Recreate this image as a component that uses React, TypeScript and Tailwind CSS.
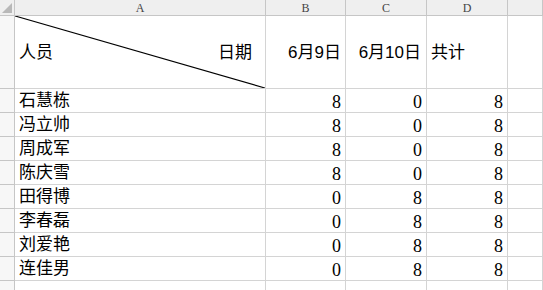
import clsx from "clsx";

const rows: [string, number, number, number][] = [
  ["石慧栋", 8, 0, 8],
  ["冯立帅", 8, 0, 8],
  ["周成军", 8, 0, 8],
  ["陈庆雪", 8, 0, 8],
  ["田得博", 0, 8, 8],
  ["李春磊", 0, 8, 8],
  ["刘爱艳", 0, 8, 8],
  ["连佳男", 0, 8, 8],
];

const cjk = "font-['Liberation_Sans','Noto_Sans_CJK_SC',sans-serif]";
const num = "font-['Liberation_Serif','Noto_Sans_CJK_SC',serif]";

function Cell({
  className,
  children,
}: {
  className?: string;
  children?: React.ReactNode;
}) {
  return (
    <div
      className={clsx(
        "border-r border-b border-[#d4d4d4] bg-white flex items-center overflow-hidden whitespace-nowrap",
        className,
      )}
    >
      {children}
    </div>
  );
}

function ColHead({ label }: { label?: string }) {
  return (
    <div className="border-r border-b border-[#c6c6c6] bg-[#efefef] flex items-center justify-center text-[12px] leading-none text-[#444] font-['Liberation_Serif',serif] pt-[1px]">
      {label}
    </div>
  );
}

export default function App() {
  return (
    <div className="w-[543px] h-[290px] overflow-hidden bg-white text-black">
      <div className="grid grid-cols-[15px_251px_80px_81px_81px_1fr] grid-rows-[16px_73px_repeat(9,24px)]">
        {/* corner */}
        <div className="relative border-r border-b border-[#c6c6c6] bg-[#efefef]">
          <div className="absolute right-[2px] bottom-[2px] w-0 h-0 border-l-[10px] border-l-transparent border-b-[10px] border-b-[#b8b8b8]" />
        </div>
        <ColHead label="A" />
        <ColHead label="B" />
        <ColHead label="C" />
        <ColHead label="D" />
        <ColHead />

        {/* header row */}
        <div className="border-r border-b border-[#c6c6c6] bg-[#f7f7f7]" />
        <Cell className={clsx("relative justify-between px-[4px] text-[17px]", cjk)}>
          <svg
            className="absolute inset-0 w-full h-full"
            viewBox="0 0 250 72"
            preserveAspectRatio="none"
          >
            <line x1="0" y1="0" x2="250" y2="72" stroke="#000" strokeWidth="1.2" />
          </svg>
          <span className="pt-[2px]">人员</span>
          <span className="pt-[2px] pr-[9px]">日期</span>
        </Cell>
        <Cell className={clsx("justify-end pr-[4px] text-[17px] pt-[2px]", cjk)}>6月9日</Cell>
        <Cell className={clsx("justify-end pr-[5px] text-[17px] pt-[2px]", cjk)}>6月10日</Cell>
        <Cell className={clsx("pl-[4px] text-[17px] pt-[2px]", cjk)}>共计</Cell>
        <Cell />

        {rows.map(([name, b, c, d]) => (
          <div key={name} className="contents">
            <div className="border-r border-b border-[#c6c6c6] bg-[#f7f7f7]" />
            <Cell className={clsx("pl-[4px] text-[17px]", cjk)}>{name}</Cell>
            <Cell className={clsx("justify-end pr-[4px] text-[18px] pt-[3px]", num)}>{b}</Cell>
            <Cell className={clsx("justify-end pr-[4px] text-[18px] pt-[3px]", num)}>{c}</Cell>
            <Cell className={clsx("justify-end pr-[4px] text-[18px] pt-[3px]", num)}>{d}</Cell>
            <Cell />
          </div>
        ))}

        {/* empty row 10 */}
        <div className="border-r border-b border-[#c6c6c6] bg-[#f7f7f7]" />
        <Cell />
        <Cell />
        <Cell />
        <Cell />
        <Cell />
      </div>
    </div>
  );
}
